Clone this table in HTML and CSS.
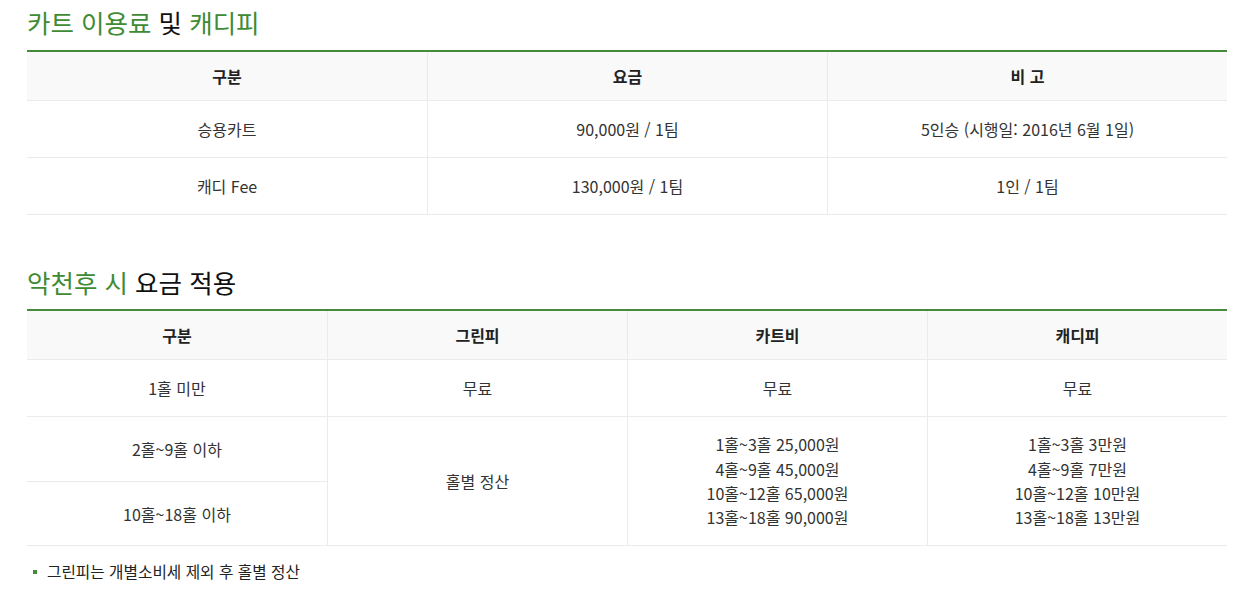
FILE: index.html
```html
<!DOCTYPE html>
<html lang="ko">
<head>
<meta charset="utf-8">
<link rel="stylesheet" href="styles.css">
</head>
<body>
<div class="page">
  <section class="sec">
    <h2 class="title"><span class="g">카트 이용료</span> 및 <span class="g">캐디피</span></h2>
    <table class="tbl t3">
      <thead>
        <tr><th>구분</th><th>요금</th><th>비 고</th></tr>
      </thead>
      <tbody>
        <tr><td>승용카트</td><td>90,000원 / 1팀</td><td>5인승 (시행일: 2016년 6월 1일)</td></tr>
        <tr><td>캐디 Fee</td><td>130,000원 / 1팀</td><td>1인 / 1팀</td></tr>
      </tbody>
    </table>
  </section>
  <section class="sec sec2">
    <h2 class="title"><span class="g">악천후 시</span> 요금 적용</h2>
    <table class="tbl t4">
      <thead>
        <tr><th>구분</th><th>그린피</th><th>카트비</th><th>캐디피</th></tr>
      </thead>
      <tbody>
        <tr class="r1"><td>1홀 미만</td><td>무료</td><td>무료</td><td>무료</td></tr>
        <tr class="r2"><td>2홀~9홀 이하</td><td rowspan="2">홀별 정산</td>
          <td rowspan="2" class="multi">1홀~3홀 25,000원<br>4홀~9홀 45,000원<br>10홀~12홀 65,000원<br>13홀~18홀 90,000원</td>
          <td rowspan="2" class="multi">1홀~3홀 3만원<br>4홀~9홀 7만원<br>10홀~12홀 10만원<br>13홀~18홀 13만원</td></tr>
        <tr class="r3"><td>10홀~18홀 이하</td></tr>
      </tbody>
    </table>
    <ul class="notes">
      <li>그린피는 개별소비세 제외 후 홀별 정산</li>
    </ul>
  </section>
</div>
</body>
</html>
```
FILE: styles.css
```css
* { box-sizing: border-box; }
html, body { margin: 0; padding: 0; background: #fff; }
body {
  font-family: "Noto Sans CJK KR", "Noto Sans", sans-serif;
  color: #333;
}
.page { padding: 0 18px 0 27px; width: 1245px; }
.sec { margin: 0; }
.sec2 { margin-top: 47px; }
.title {
  margin: 0;
  font-size: 25.5px;
  font-weight: 400;
  line-height: 44px;
  height: 50px;
  color: #111;
}
.sec2 .title { height: 47px; line-height: 39px; }
.title .g { color: #3f8b34; }
.tbl {
  width: 1200px;
  border-collapse: separate;
  border-spacing: 0;
  table-layout: fixed;
  border-top: 2px solid #458c3a;
  font-size: 16px;
}
.tbl th, .tbl td {
  text-align: center;
  border-bottom: 1px solid #ebebeb;
  border-left: 1px solid #ebebeb;
  padding: 0;
  vertical-align: middle;
}
.tbl th:first-child, .tbl td:first-child { border-left: none; }
.tbl th {
  background: #f8f9f8;
  font-weight: 700;
  color: #222;
  height: 49px;
}
.tbl td { color: #333; height: 57px; }
.t4 .r2 td { height: 65px; }
.t4 .r3 td { height: 64px; border-left: none; }
.multi { line-height: 24.3px; padding-bottom: 1px; }
.notes {
  list-style: none;
  margin: 16px 0 0;
  padding: 0 0 0 6px;
  font-size: 15.7px;
  color: #222;
}
.notes li {
  display: flex;
  align-items: center;
  gap: 10px;
  line-height: 20px;
}
.notes li::before {
  content: "";
  width: 4px;
  height: 4px;
  background: #458c3a;
  flex: none;
}
```
